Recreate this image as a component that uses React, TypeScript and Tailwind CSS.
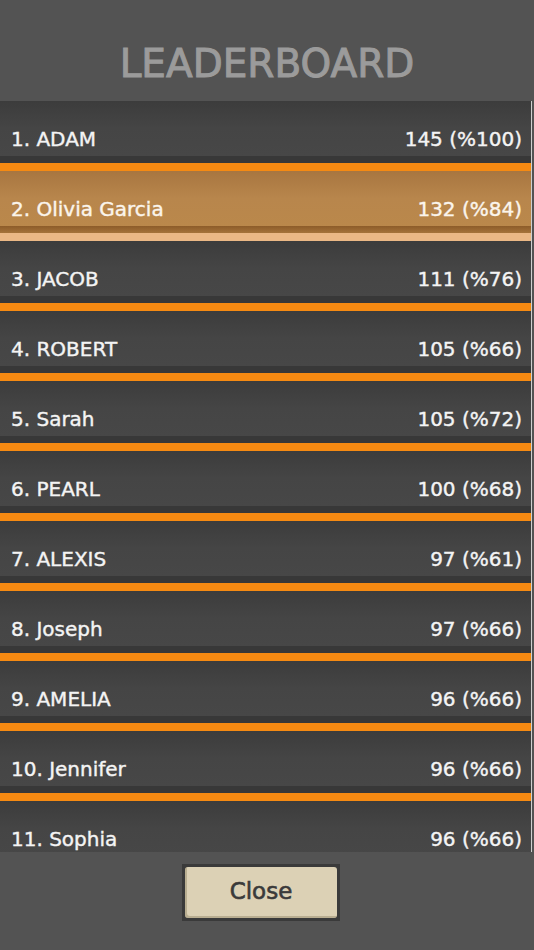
const rows = [
  { name: "1. ADAM", score: "145 (%100)" },
  { name: "2. Olivia Garcia", score: "132 (%84)", me: true },
  { name: "3. JACOB", score: "111 (%76)" },
  { name: "4. ROBERT", score: "105 (%66)" },
  { name: "5. Sarah", score: "105 (%72)" },
  { name: "6. PEARL", score: "100 (%68)" },
  { name: "7. ALEXIS", score: "97 (%61)" },
  { name: "8. Joseph", score: "97 (%66)" },
  { name: "9. AMELIA", score: "96 (%66)" },
  { name: "10. Jennifer", score: "96 (%66)" },
  { name: "11. Sophia", score: "96 (%66)" },
];

function Row({ name, score, me }: { name: string; score: string; me?: boolean }) {
  return (
    <div>
      <div
        className={
          me
            ? "flex h-[55px] items-center justify-between bg-gradient-to-b from-[#a87640] via-[#b8864c] to-[#ba884b] pl-[11px] pr-[9px] pt-[20px] text-[20px] text-[#fbf5ec] [-webkit-text-stroke:0.4px_currentColor]"
            : "flex h-[55px] items-center justify-between bg-gradient-to-b from-[#3c3c3c] via-[#454545] to-[#474747] pl-[11px] pr-[9px] pt-[20px] text-[20px] text-[#f4f4f4] [-webkit-text-stroke:0.4px_currentColor]"
        }
      >
        <span>{name}</span>
        <span>{score}</span>
      </div>
      <div className={me ? "h-[7px] bg-gradient-to-b from-[#8d5c29] to-[#a5733b]" : "h-[7px] bg-[#383838]"} />
      <div className={me ? "h-[8px] bg-[#ebb886]" : "h-[8px] bg-[#f68a12]"} />
    </div>
  );
}

export default function App() {
  return (
    <div
      className="flex h-[950px] w-[534px] flex-col overflow-hidden bg-[#535353]"
      style={{ fontFamily: '"DejaVu Sans", sans-serif' }}
    >
      <div className="flex h-[101px] shrink-0 items-center justify-center pt-[27px] text-[39px] text-[#9b9b9b] [-webkit-text-stroke:1px_currentColor]">
        LEADERBOARD
      </div>
      <div className="h-[751px] w-[532px] shrink-0 overflow-hidden border-r border-[#cfcfcf] shadow-[inset_0_3px_4px_rgba(0,0,0,0.25)]">
        {rows.map((r) => (
          <Row key={r.name} {...r} />
        ))}
      </div>
      <div className="flex flex-1 items-start pl-[182px] pt-[12px]">
        <button className="h-[57px] w-[158px] bg-[#3a3a3a] p-[3px]">
          <span className="flex h-full w-full items-center justify-center rounded-[3px] bg-[#dcd1b5] pb-[2px] text-[23px] text-[#3a3a3a] shadow-[inset_2px_-2px_0_rgba(150,140,110,0.5)] [-webkit-text-stroke:0.6px_currentColor]">
            Close
          </span>
        </button>
      </div>
    </div>
  );
}
